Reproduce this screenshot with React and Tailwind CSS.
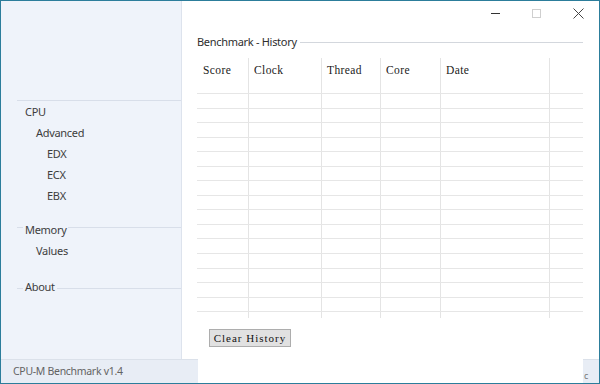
const ui = { fontFamily: '"Noto Sans", "Open Sans", sans-serif' }
const serif = { fontFamily: '"Liberation Serif", "DejaVu Serif", serif' }

const columns = [
  { label: 'Score', w: 'w-[51px]' },
  { label: 'Clock', w: 'w-[73px]' },
  { label: 'Thread', w: 'w-[59px]' },
  { label: 'Core', w: 'w-[60px]' },
  { label: 'Date', w: 'w-[109px]' },
  { label: '', w: 'flex-1' },
]

function Cells({ header }) {
  return columns.map((c, i) => (
    <div
      key={i}
      className={`${c.w} h-full text-[11.5px] leading-[14px] ${i > 0 ? 'border-l border-[#e4e4e4]' : ''} ${
        header ? (i > 0 ? 'pl-[5px] pt-[5px]' : 'pl-[6px] pt-[5px]') : ''
      }`}
    >
      {header && (
        <span className="tracking-[0.4px] text-[#1a1a1a]" style={serif}>
          {c.label}
        </span>
      )}
    </div>
  ))
}

function NavItem({ children, indent }) {
  return (
    <div className={`h-[21px] leading-[21px] ${indent}`}>{children}</div>
  )
}

function GroupHead({ label, lineTop, className }) {
  // label sitting on a rule, like a group box legend
  return (
    <div className={`flex h-[21px] items-start ${className}`}>
      <span className={`w-[6px] border-t border-[#d8dee9] ${lineTop}`} />
      <span className="px-[2px] leading-[21px]">{label}</span>
      <span className={`flex-1 border-t border-[#d8dee9] ${lineTop}`} />
    </div>
  )
}

export default function App() {
  return (
    <div
      className="flex h-[384px] w-[600px] flex-col overflow-hidden border border-[#2c7d9b] bg-white"
      style={ui}
    >
      <div className="flex flex-1">
        {/* sidebar */}
        <aside className="w-[181px] border-r border-[#dde3ed] bg-[#eff3fa] pt-[99px] pl-[16px] text-[11px] tracking-[-0.3px] text-[#3d3d3d]">
          <div className="border-t border-[#d8dee9]">
            <NavItem indent="pl-[8px]">CPU</NavItem>
            <NavItem indent="pl-[19px]">Advanced</NavItem>
            <NavItem indent="pl-[30px]">EDX</NavItem>
            <NavItem indent="pl-[30px]">ECX</NavItem>
            <NavItem indent="pl-[30px]">EBX</NavItem>
          </div>
          <GroupHead label="Memory" lineTop="mt-[8px]" className="mt-[13px]" />
          <NavItem indent="pl-[19px]">Values</NavItem>
          <GroupHead label="About" lineTop="mt-[12px]" className="mt-[15px]" />
        </aside>

        {/* main panel */}
        <main className="flex flex-1 flex-col pl-[15px] pr-[16px]">
          <div className="-mr-[16px] flex h-[25px] justify-end text-[#3a3a3a]">
            <div className="flex w-[41px] items-center justify-center">
              <span className="w-[9px] border-t border-[#333]" />
            </div>
            <div className="flex w-[41px] items-center justify-center">
              <span className="h-[9px] w-[9px] border border-[#cfcfcf]" />
            </div>
            <div className="flex w-[42px] items-center justify-center">
              <svg width="11" height="11" viewBox="0 0 11 11">
                <path d="M0.5 0.5L10.5 10.5M10.5 0.5L0.5 10.5" stroke="#444" strokeWidth="1" />
              </svg>
            </div>
          </div>

          <div className="mt-[8px] flex h-[16px] items-center gap-[3px]">
            <span className="text-[11px] tracking-[-0.3px] text-[#2e2e2e]">Benchmark - History</span>
            <span className="flex-1 border-t border-[#d3d7dd]" />
          </div>

          <div className="mt-[8px]">
            <div className="flex h-[36px] border-b border-[#e6e6e6]">
              <Cells header />
            </div>
            {Array.from({ length: 15 }).map((_, r) => (
              <div key={r} className="flex h-[14.55px] border-b border-[#e6e6e6]">
                <Cells />
              </div>
            ))}
            <div className="flex h-[6px]">
              <Cells />
            </div>
          </div>

          <div className="mt-[11px] pl-[12px]">
            <button
              className="flex h-[18px] w-[82px] items-center justify-center border border-[#adadad] bg-[#e1e1e1] text-[11px] tracking-[1px] text-[#111]"
              style={serif}
            >
              Clear History
            </button>
          </div>
        </main>
      </div>

      {/* status bar */}
      <div className="flex h-[24px]">
        <div className="flex w-[197px] items-center border-t border-[#dbe1ea] bg-[#e8edf5] pl-[12px] text-[10.5px] tracking-[-0.3px] text-[#636363]">
          CPU-M Benchmark v1.4
        </div>
        <div className="flex-1 bg-white" />
        <div className="flex w-[16px] items-end border-t border-[#dbe1ea] bg-[#e8edf5] pb-[1px] pl-[1px] text-[9px] leading-[12px] text-[#777]">
          c
        </div>
      </div>
    </div>
  )
}
